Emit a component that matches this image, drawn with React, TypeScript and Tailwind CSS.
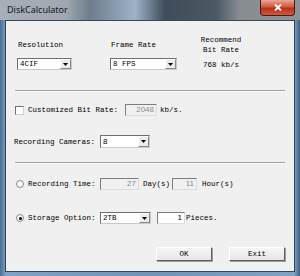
import React from "react";

const mono = "font-['Liberation_Mono',monospace] text-[7.5px] leading-[10px] text-black whitespace-pre";
const sans = "font-['Liberation_Sans',Arial,sans-serif]";

function Arrow() {
  return (
    <div className="flex h-full w-[11px] items-center justify-center border border-t-white border-l-white border-b-[#8a8a8a] border-r-[#8a8a8a] bg-[#ececec]">
      <svg width="5" height="3" viewBox="0 0 5 3">
        <path d="M0 0 H5 L2.5 3 Z" fill="#000" />
      </svg>
    </div>
  );
}

function Select({ w, h = 12, value, valueClass }: { w: number; h?: number; value: string; valueClass?: string }) {
  return (
    <div
      className="flex items-stretch border border-t-[#6f6f6f] border-l-[#6f6f6f] border-b-[#c8c8c8] border-r-[#c8c8c8] bg-white"
      style={{ width: w, height: h }}
    >
      <div className={`flex flex-1 items-center pl-[2px] ${valueClass ?? mono}`}>{value}</div>
      <Arrow />
    </div>
  );
}

function Field({ w, value, white }: { w: number; value: string; white?: boolean }) {
  return (
    <div
      className={`flex h-[12px] items-center justify-end border border-t-[#7d7d7d] border-l-[#7d7d7d] border-b-[#dcdcdc] border-r-[#dcdcdc] pr-[2px] text-[8px] ${sans} ${
        white ? "bg-white text-black" : "bg-[#f0f0f0] text-[#8c8c8c]"
      }`}
      style={{ width: w }}
    >
      {value}
    </div>
  );
}

function Radio({ on }: { on?: boolean }) {
  return (
    <div className="flex h-[8px] w-[8px] items-center justify-center rounded-full border border-[#8a8a8a] bg-[#f8f8f8]">
      {on && <div className="h-[3px] w-[3px] rounded-full bg-black" />}
    </div>
  );
}

function Separator() {
  return (
    <div className="mx-[9px] flex flex-col">
      <div className="h-px bg-[#a0a0a0]" />
      <div className="h-px bg-white" />
    </div>
  );
}

function Button({ label }: { label: string }) {
  return (
    <div className={`flex h-[14px] w-[56px] items-center justify-center border border-t-white border-l-white border-b-[#5e5e5e] border-r-[#5e5e5e] bg-[linear-gradient(#f6f6f6,#e6e6e6)] shadow-[1px_1px_0_#a0a0a0] ${mono}`}>
      {label}
    </div>
  );
}

export default function App() {
  return (
    <div className="flex h-[276px] w-[300px] flex-col overflow-hidden bg-[linear-gradient(90deg,#4a6d92,#7ea3c7_2%,#6f94b9_50%,#7ea3c7_98%,#3d5f82)]">
      {/* title bar */}
      <div className="relative flex h-[20px] items-center bg-[linear-gradient(90deg,#a7b0b9_0%,#9fa8b1_22%,#6d7d8d_30%,#9fb2c8_45%,#3f4c59_55%,#4c5864_72%,#888d92_80%,#8e9297_100%)] pl-[7px]">
        <span className={`${sans} text-[9px] text-[#141414]`} style={{ fontFamily: "'Segoe UI','Noto Sans',sans-serif" }}>
          DiskCalculator
        </span>
        <div className="absolute left-[260px] top-0 flex h-[16px] w-[35px] items-center justify-center rounded-b-[4px] border border-t-0 border-[#4b1a14] bg-[linear-gradient(#e9a699,#d0573f_45%,#b8301b_55%,#cf5a3a)]">
          <svg width="8" height="7" viewBox="0 0 8 7">
            <path d="M1 0.5 L7 6.5 M7 0.5 L1 6.5" stroke="#fff" strokeWidth="1.8" />
          </svg>
        </div>
      </div>

      {/* client area */}
      <div className="flex flex-1 px-[5px] pb-[4px]">
        <div className="flex flex-1 flex-col border border-[#34475a] bg-[#f0f0f0]">
          {/* resolution / frame rate */}
          <div className="flex pl-[11px] pt-[14px]">
            <div className="flex flex-col">
              <div className={`mt-[5px] pl-px ${mono}`}>Resolution</div>
              <div className="mt-[8px]">
                <Select w={55} value="4CIF" />
              </div>
            </div>
            <div className="ml-[38px] flex flex-col">
              <div className={`mt-[5px] pl-px ${mono}`}>Frame Rate</div>
              <div className="mt-[8px]">
                <Select w={67} value="8 FPS" />
              </div>
            </div>
            <div className="ml-[19px] flex w-[50px] flex-col items-center">
              <div className={`${mono} leading-[9px]`}>Recommend</div>
              <div className={`${mono} leading-[9px]`}>Bit Rate</div>
              <div className={`mt-[5px] ${mono} leading-[9px]`}>768 kb/s</div>
            </div>
          </div>

          <div className="mt-[20px]">
            <Separator />
          </div>

          {/* customized bit rate */}
          <div className="mt-[12px] flex h-[12px] items-center pl-[9px]">
            <div className="h-[9px] w-[9px] border border-t-[#6f6f6f] border-l-[#6f6f6f] border-b-[#d0d0d0] border-r-[#d0d0d0] bg-white" />
            <div className={`ml-[4px] w-[97px] ${mono}`}>Customized Bit Rate:</div>
            <Field w={32} value="2048" />
            <div className={`ml-[3px] ${mono}`}>kb/s.</div>
          </div>

          {/* cameras */}
          <div className="mt-[19px] flex h-[13px] items-center pl-[8px]">
            <div className={`w-[86px] ${mono}`}>Recording Cameras:</div>
            <Select w={50} h={13} value="8" valueClass={`${sans} text-[8px] text-black`} />
          </div>

          <div className="mt-[14px]">
            <Separator />
          </div>

          {/* recording time */}
          <div className="mt-[14px] flex h-[12px] items-center pl-[10px]">
            <Radio />
            <div className={`ml-[4px] w-[72px] ${mono}`}>Recording Time:</div>
            <Field w={39} value="27" />
            <div className={`ml-[4px] w-[29px] ${mono}`}>Day(s)</div>
            <Field w={25} value="11" />
            <div className={`ml-[5px] ${mono}`}>Hour(s)</div>
          </div>

          {/* storage */}
          <div className="mt-[22px] flex h-[12px] items-center pl-[10px]">
            <Radio on />
            <div className={`ml-[4px] w-[72px] ${mono}`}>Storage Option:</div>
            <Select w={51} value="2TB" />
            <div className="ml-[6px]">
              <Field w={28} value="1" white />
            </div>
            <div className={`ml-px ${mono}`}>Pieces.</div>
          </div>

          {/* buttons */}
          <div className="mt-[23px] flex justify-end gap-[17px] pr-[9px]">
            <Button label="OK" />
            <Button label="Exit" />
          </div>
        </div>
      </div>
    </div>
  );
}
